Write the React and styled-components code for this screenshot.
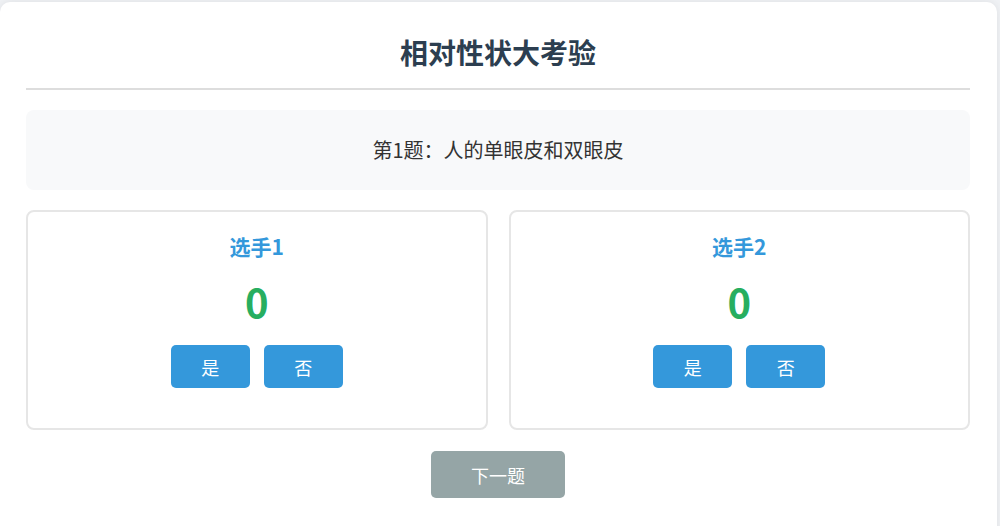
import React, { useState } from "react";
import styled, { createGlobalStyle } from "styled-components";

const Global = createGlobalStyle`
  html, body { margin: 0; padding: 0; }
  body {
    background: #f0f2f5;
    font-family: "Noto Sans CJK SC", "Noto Sans", sans-serif;
  }
`;

const Container = styled.div`
  box-sizing: border-box;
  width: 997px;
  min-height: 540px;
  margin-top: 2px;
  background: #ffffff;
  border-radius: 10px;
  box-shadow: 0 0 8px rgba(0, 0, 0, 0.08);
  padding: 0 27px 0 26px;
  display: flex;
  flex-direction: column;
`;

const Header = styled.div`
  padding: 33px 0 19px;
  border-bottom: 2px solid #dddddd;
  text-align: center;
`;

const Title = styled.h1`
  margin: 0;
  font-size: 28px;
  line-height: 34px;
  font-weight: 700;
  color: #2c3e50;
`;

const Question = styled.div`
  margin-top: 20px;
  background: #f8f9fa;
  border-radius: 8px;
  padding: 26px 20px;
  text-align: center;
  font-size: 20px;
  line-height: 28px;
  color: #333333;
`;

const Players = styled.div`
  margin-top: 20px;
  display: grid;
  grid-template-columns: 1fr 1fr;
  gap: 21px;
`;

const Card = styled.div`
  box-sizing: border-box;
  height: 220px;
  border: 2px solid #e6e6e6;
  border-radius: 8px;
  padding: 19px 20px 0;
  display: flex;
  flex-direction: column;
  align-items: center;
`;

const Name = styled.div`
  font-size: 21px;
  line-height: 30px;
  font-weight: 700;
  color: #3498db;
`;

const Score = styled.div`
  margin-top: 16px;
  font-size: 40px;
  line-height: 48px;
  font-weight: 700;
  color: #27ae60;
`;

const Buttons = styled.div`
  margin-top: 20px;
  display: flex;
  gap: 14px;
`;

const Button = styled.button`
  width: 79px;
  height: 43px;
  border: none;
  border-radius: 5px;
  background: #3498db;
  color: #ffffff;
  font-family: inherit;
  font-size: 18px;
  cursor: pointer;
  padding: 0;
`;

const Footer = styled.div`
  margin-top: 21px;
  display: flex;
  justify-content: center;
`;

const NextButton = styled.button`
  width: 134px;
  height: 47px;
  border: none;
  border-radius: 5px;
  background: #95a5a6;
  color: #ffffff;
  font-family: inherit;
  font-size: 18px;
  padding: 0;
`;

export default function App() {
  const [scores, setScores] = useState([0, 0]);
  const players = ["选手1", "选手2"];
  return (
    <>
      <Global />
      <Container>
        <Header>
          <Title>相对性状大考验</Title>
        </Header>
        <Question>第1题：人的单眼皮和双眼皮</Question>
        <Players>
          {players.map((p, i) => (
            <Card key={p}>
              <Name>{p}</Name>
              <Score>{scores[i]}</Score>
              <Buttons>
                <Button
                  onClick={() =>
                    setScores((s) => s.map((v, j) => (j === i ? v + 1 : v)))
                  }
                >
                  是
                </Button>
                <Button>否</Button>
              </Buttons>
            </Card>
          ))}
        </Players>
        <Footer>
          <NextButton disabled>下一题</NextButton>
        </Footer>
      </Container>
    </>
  );
}
